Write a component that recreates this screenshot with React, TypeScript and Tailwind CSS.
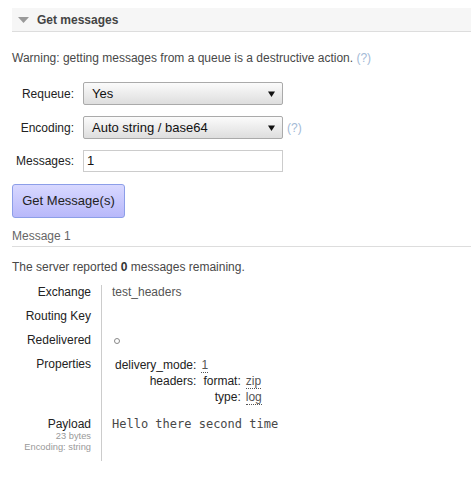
import React from 'react'

const font = { fontFamily: '"Liberation Sans", Arial, sans-serif' }

function Arrow() {
  return (
    <svg width="7" height="6" viewBox="0 0 7 6" className="shrink-0">
      <path d="M0 0.5 H7 L3.5 6 Z" fill="#111" />
    </svg>
  )
}

function FakeSelect({ value }: { value: string }) {
  return (
    <div className="flex h-[23px] w-[200px] items-center justify-between rounded-[2px] border border-[#aaa] bg-gradient-to-b from-[#fbfbfb] to-[#dedede] pl-[8px] pr-[7px] text-[13px] text-[#111]">
      <span>{value}</span>
      <Arrow />
    </div>
  )
}

function Abbr({ children }: { children: React.ReactNode }) {
  return <span className="border-b border-dotted border-[#555] leading-[12px] text-[#555]">{children}</span>
}

export default function App() {
  return (
    <div className="min-h-screen bg-white pl-[12px] pt-[8px] text-[12px] text-[#484848]" style={font}>
      {/* section header */}
      <div className="flex h-[24px] items-center border-b border-[#ddd] bg-[#f6f6f6] pl-[6px]">
        <svg width="11" height="6" viewBox="0 0 11 6" className="mr-[8px]">
          <path d="M0 0 H11 L5.5 6 Z" fill="#999" />
        </svg>
        <span className="text-[12px] font-bold text-[#444]">Get messages</span>
      </div>

      <p className="mt-[19px] leading-[14px]">
        Warning: getting messages from a queue is a destructive action. <span className="text-[#a3bad6]">(?)</span>
      </p>

      <div className="mt-[17px] grid grid-cols-[62px_auto] items-center gap-x-[9px] gap-y-[11px] text-[#222]">
        <label className="text-right text-[12px]">Requeue:</label>
        <FakeSelect value="Yes" />
        <label className="text-right text-[12px]">Encoding:</label>
        <div className="flex items-center gap-[4px]">
          <FakeSelect value="Auto string / base64" />
          <span className="text-[#a3bad6]">(?)</span>
        </div>
        <label className="text-right text-[12px]">Messages:</label>
        <div className="flex h-[22px] w-[200px] items-center border border-[#ccc] bg-white pl-[3px] text-[13px] text-[#111]">
          1
        </div>
      </div>

      <button className="mt-[12px] h-[34px] w-[113px] rounded-[3px] border border-[#8c9ee8] bg-gradient-to-b from-[#d8d8ff] to-[#b8b8fa] text-[13px] text-[#222]">
        Get Message(s)
      </button>

      <div className="mt-[11px] border-b border-[#ddd] pb-[3px] leading-[14px] text-[#666]">Message 1</div>

      <p className="mt-[13px] leading-[14px]">
        The server reported <b className="text-[#333]">0</b> messages remaining.
      </p>

      <div className="mt-[11px] grid grid-cols-[89px_auto] leading-[14px]">
        <div className="pr-[10px] pb-[10px] text-right text-[#222]">Exchange</div>
        <div className="border-l border-[#ccc] pb-[10px] pl-[10px] text-[#555]">test_headers</div>

        <div className="pr-[10px] pb-[10px] text-right text-[#222]">Routing Key</div>
        <div className="border-l border-[#ccc] pb-[10px] pl-[10px]"></div>

        <div className="pr-[10px] pb-[10px] text-right text-[#222]">Redelivered</div>
        <div className="flex items-center border-l border-[#ccc] pb-[10px] pl-[12px]">
          <span className="mt-[1px] h-[6px] w-[6px] rounded-full border border-[#888]"></span>
        </div>

        <div className="pr-[10px] pb-[10px] text-right text-[#222]">Properties</div>
        <div className="border-l border-[#ccc] pb-[12px] pl-[13px] text-[#222]">
          <div className="grid grid-cols-[auto_auto] justify-start gap-x-[5px] leading-[16px]">
            <span className="text-right">delivery_mode:</span>
            <span>
              <Abbr>1</Abbr>
            </span>
            <span className="text-right">headers:</span>
            <div className="grid grid-cols-[auto_auto] justify-start gap-x-[5px] pl-[2px]">
              <span className="text-right">format:</span>
              <span>
                <Abbr>zip</Abbr>
              </span>
              <span className="text-right">type:</span>
              <span>
                <Abbr>log</Abbr>
              </span>
            </div>
          </div>
        </div>

        <div className="pr-[10px] pb-[8px] text-right text-[#222]">
          <div>Payload</div>
          <div className="text-[9.3px] leading-[11px] text-[#999]">23 bytes</div>
          <div className="text-[9.3px] leading-[11px] text-[#999]">Encoding: string</div>
        </div>
        <div
          className="border-l border-[#ccc] pb-[8px] pl-[10px] text-[12px] text-[#484848]"
          style={{ fontFamily: '"DejaVu Sans Mono", monospace' }}
        >
          Hello there second time
        </div>
      </div>
    </div>
  )
}
